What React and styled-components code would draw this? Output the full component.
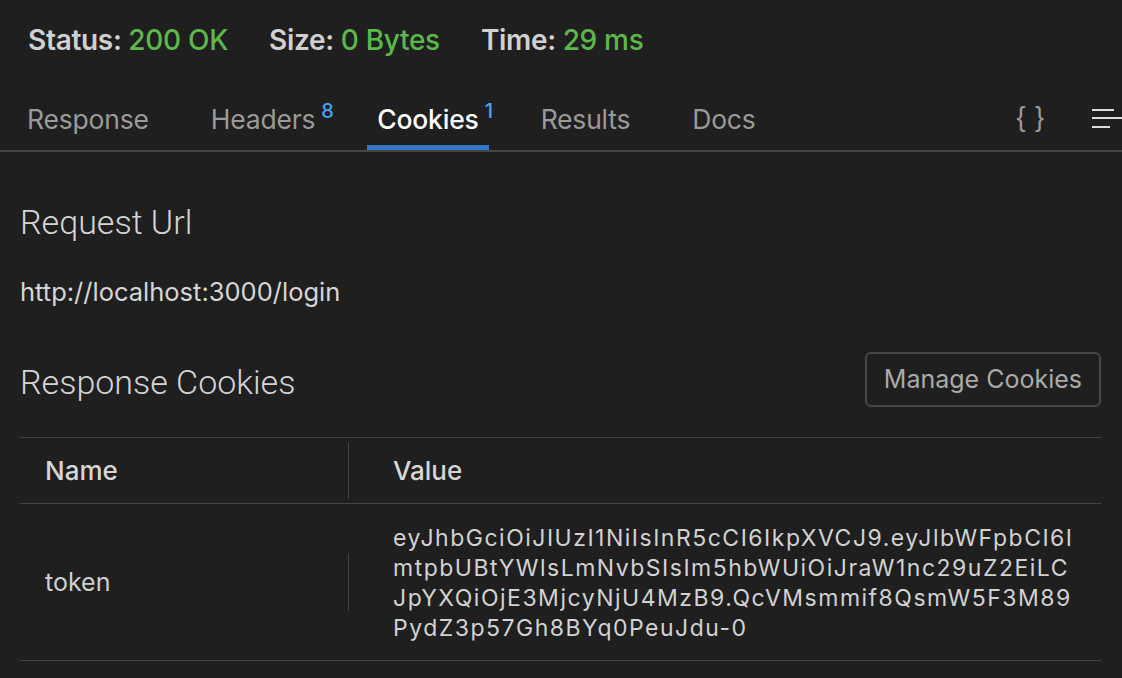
import React from "react";
import styled, { createGlobalStyle } from "styled-components";

const GlobalStyle = createGlobalStyle`
  html, body {
    margin: 0;
    padding: 0;
    background: #1f1f1f;
  }
  body {
    font-family: Inter, "Noto Sans", sans-serif;
    color: #cccccc;
    overflow: hidden;
  }
`;

const Page = styled.div`
  width: 1122px;
  height: 678px;
  background: #1f1f1f;
  overflow: hidden;
`;

const StatusBar = styled.div`
  display: flex;
  align-items: center;
  gap: 41px;
  height: 80px;
  padding-left: 28px;
  font-size: 28px;
`;

const StatusItem = styled.div`
  font-weight: 600;
  color: #d0d0d0;
  letter-spacing: -0.3px;

  span {
    font-weight: 500;
    color: #5cb84a;
  }
`;

const TabBar = styled.div`
  display: flex;
  align-items: stretch;
  height: 69px;
  margin-top: 1px;
  padding-left: 17px;
  border-bottom: 2px solid #454545;
  gap: 42px;
`;

const Tab = styled.div`
  position: relative;
  display: flex;
  align-items: center;
  padding: 12px 10px 0;
  font-size: 26.5px;
  font-weight: ${(p) => (p.$active ? 500 : 400)};
  color: ${(p) => (p.$active ? "#ffffff" : "#9a9a9a")};
  letter-spacing: -0.2px;
  border-bottom: 5px solid ${(p) => (p.$active ? "#3378c8" : "transparent")};
`;

const Count = styled.sup`
  position: absolute;
  top: 20px;
  left: calc(100% - 4px);
  font-size: 20px;
  font-weight: 500;
  color: #4aa3f0;
  line-height: 1;
`;

const TabTools = styled.div`
  margin-left: auto;
  display: flex;
  align-items: center;
  gap: 47px;
  padding-top: 4px;
`;

const Braces = styled.div`
  font-family: "Liberation Sans", Arial, sans-serif;
  font-size: 27px;
  color: #9a9a9a;
  letter-spacing: 1px;
`;

const Menu = styled.div`
  display: flex;
  flex-direction: column;
  gap: 6.5px;
  width: 30px;
  margin-top: 1px;

  i {
    display: block;
    height: 2px;
    background: #dcdcdc;
  }
`;

const Content = styled.div`
  padding: 0 21px 0 20px;
`;

const SectionTitle = styled.h2`
  margin: 0;
  font-family: Roboto, "Noto Sans", sans-serif;
  font-weight: 300;
  font-size: 34px;
  color: #d4d4d4;
  letter-spacing: 0px;
`;

const UrlTitle = styled(SectionTitle)`
  padding-top: 50px;
  line-height: 40px;
`;

const CookiesTitle = styled(SectionTitle)`
  margin-top: 5px;
`;

const UrlText = styled.div`
  margin-top: 35px;
  font-size: 25.5px;
  color: #d6d6d6;
  line-height: 30px;
`;

const CookiesHead = styled.div`
  display: flex;
  align-items: center;
  justify-content: space-between;
  margin-top: 44px;
  height: 56px;
`;

const ManageButton = styled.button`
  height: 55px;
  padding: 0 17px;
  background: transparent;
  border: 2px solid #474747;
  border-radius: 6px;
  font-family: Inter, "Noto Sans", sans-serif;
  font-size: 25px;
  color: #aaaaaa;
  cursor: pointer;
`;

const Table = styled.div`
  margin-top: 30px;
  border-top: 1px solid #444;
`;

const Row = styled.div`
  display: grid;
  grid-template-columns: 328px 1fr;
  align-items: center;
  min-height: ${(p) => p.$height}px;
  border-bottom: 1px solid #444;
`;

const Cell = styled.div`
  padding: 0 25px;
  font-size: ${(p) => (p.$head ? 26 : 25)}px;
  font-weight: ${(p) => (p.$head ? 500 : 400)};
  color: ${(p) => (p.$head ? "#d6d6d6" : "#cfcfcf")};
`;

const ValueCell = styled.div`
  position: relative;
  padding: 0 20px 0 45px;
  font-size: 26px;
  font-weight: 500;
  color: #d6d6d6;

  &::before {
    content: "";
    position: absolute;
    left: 0;
    top: 50%;
    height: ${(p) => p.$divider}px;
    transform: translateY(-50%);
    border-left: 1px solid #444;
  }
`;

const Token = styled.div`
  font-family: Inter, "Noto Sans", sans-serif;
  font-weight: 400;
  font-size: 23px;
  line-height: 30px;
  letter-spacing: 1.5px;
  color: #d2d2d2;
  padding: 1px 0 0;
`;

const tokenLines = [
  "eyJhbGciOiJIUzI1NiIsInR5cCI6IkpXVCJ9.eyJlbWFpbCI6I",
  "mtpbUBtYWlsLmNvbSIsIm5hbWUiOiJraW1nc29uZ2EiLC",
  "JpYXQiOjE3MjcyNjU4MzB9.QcVMsmmif8QsmW5F3M89",
  "PydZ3p57Gh8BYq0PeuJdu-0",
];

export default function App() {
  return (
    <Page>
      <GlobalStyle />
      <StatusBar>
        <StatusItem>
          Status: <span>200 OK</span>
        </StatusItem>
        <StatusItem>
          Size: <span>0 Bytes</span>
        </StatusItem>
        <StatusItem>
          Time: <span>29 ms</span>
        </StatusItem>
      </StatusBar>

      <TabBar>
        <Tab>Response</Tab>
        <Tab>
          Headers<Count>8</Count>
        </Tab>
        <Tab $active>
          Cookies<Count>1</Count>
        </Tab>
        <Tab>Results</Tab>
        <Tab>Docs</Tab>
        <TabTools>
          <Braces>{"{ }"}</Braces>
          <Menu>
            <i style={{ width: 22 }} />
            <i style={{ width: 30 }} />
            <i style={{ width: 18 }} />
          </Menu>
        </TabTools>
      </TabBar>

      <Content>
        <UrlTitle>Request Url</UrlTitle>
        <UrlText>http://localhost:3000/login</UrlText>

        <CookiesHead>
          <CookiesTitle>Response Cookies</CookiesTitle>
          <ManageButton>Manage Cookies</ManageButton>
        </CookiesHead>

        <Table>
          <Row $height={65}>
            <Cell $head>Name</Cell>
            <ValueCell $divider={56}>Value</ValueCell>
          </Row>
          <Row $height={156}>
            <Cell>token</Cell>
            <ValueCell $divider={58}>
              <Token>
                {tokenLines.map((line) => (
                  <div key={line}>{line}</div>
                ))}
              </Token>
            </ValueCell>
          </Row>
        </Table>
      </Content>
    </Page>
  );
}
